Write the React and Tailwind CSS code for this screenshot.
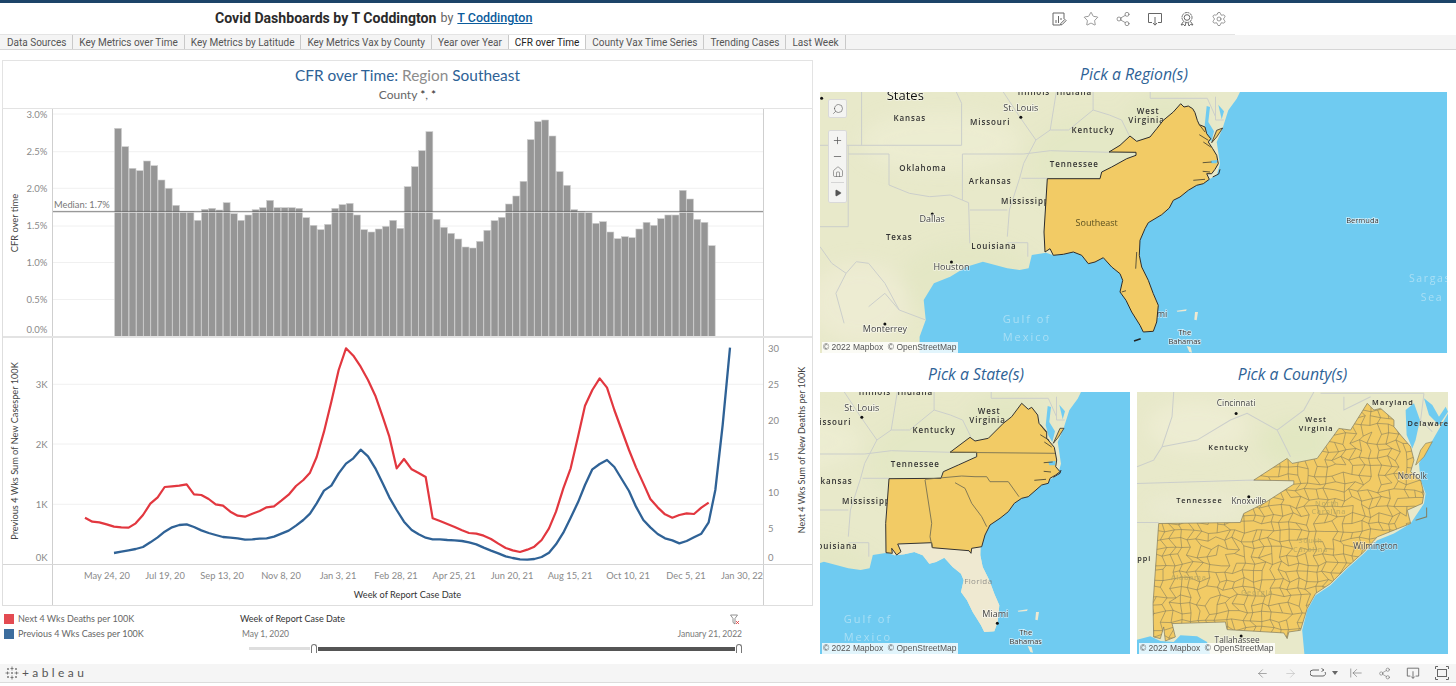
import React from "react";
import { Star, Share2, Settings, ArrowLeft, ArrowRight, ArrowLeftToLine, Plus, Minus, Home, Search, Play } from "lucide-react";

const TABS = ["Data Sources","Key Metrics over Time","Key Metrics by Latitude","Key Metrics Vax by County","Year over Year","CFR over Time","County Vax Time Series","Trending Cases","Last Week"];

const BAR_TOPS = [85,140,205,212,183,197,240,265,316,334,335,361,328,325,330,308,341,361,345,329,323,301,323,323,323,325,353,376,389,373,325,314,310,345,389,396,387,379,361,385,
260,200,152,95,358,382,400,417,441,444,424,391,362,352,312,288,244,119,65,60,108,215,256,329,335,338,370,365,396,416,410,413,387,367,376,356,345,345,271,297,358,367,437];

const RED5 = [[255,548],[277,560],[298,562],[320,568],[342,575],[364,577],[386,578],[407,565],[429,540],[451,506],[473,487],[494,456],[516,454],[538,452],[560,448],[582,478],[604,480],[626,492],[647,508],[669,512],[691,530],[713,542],[735,545],[757,536],[779,528],[800,517],[822,514],[844,497],[866,479],[888,453],[910,435],[930,413],[950,366],[972,290],[994,200],[1016,105],[1038,40],[1060,62],[1082,95],[1104,135],[1126,182],[1148,245],[1168,305],[1190,400]];
const RED6 = [[12,372],[35,403],[56,414],[77,426],[98,550],[120,558],[142,567],[164,576],[186,586],[207,594],[229,596],[251,602],[273,612],[295,626],[317,639],[338,646],[360,651],[382,644],[403,635],[425,615],[447,580],[468,530],[490,460],[512,400],[534,305],[555,212],[577,165],[599,130],[621,158],[643,225],[665,285],[687,345],[708,397],[730,445],[751,492],[773,517],[795,538],[817,548],[838,540],[860,535],[882,537],[904,518],[926,503]];
const BLUE5 = [[342,654],[364,650],[386,646],[407,642],[429,636],[451,622],[473,607],[494,590],[516,577],[538,570],[560,568],[582,576],[604,586],[626,594],[647,600],[669,606],[691,608],[713,610],[735,614],[757,613],[779,611],[800,610],[822,605],[844,596],[866,587],[888,572],[910,555],[930,536],[950,505],[972,467],[994,452],[1016,415],[1038,386],[1060,370],[1082,344],[1104,364],[1126,400],[1148,445],[1168,487],[1190,525]];
const BLUE6 = [[12,560],[35,585],[56,598],[77,608],[98,613],[120,613],[142,615],[164,616],[186,618],[207,622],[229,628],[251,638],[273,647],[295,655],[317,664],[338,669],[360,673],[382,674],[403,672],[425,666],[447,653],[468,628],[490,593],[512,548],[534,502],[555,450],[577,403],[599,387],[621,375],[643,396],[665,432],[687,468],[708,515],[730,555],[751,577],[773,597],[795,610],[817,616],[838,625],[860,618],[882,607],[904,596],[926,562],[946,465],[968,270],[990,38]];

const linePts = (a, b) => [...a.map(([x, y]) => `${x / 3},${335 + y / 3}`), ...b.map(([x, y]) => `${x / 3 + 400},${335 + y / 3}`)].join(" ");

const r8 = ([x, y]) => [(x - 11) / 2.45, (y - 96) / 3];
const r9 = ([x, y]) => [x / 3 + 154, (y - 96) / 3];
const r10 = ([x, y]) => [x / 3 + 220, y / 3];
const uv = p => p;
const pth = (a, f, close = true) => "M" + a.map(p => f(p).map(n => n.toFixed(1)).join(",")).join("L") + (close ? "Z" : "");

const SEA_W = [[1560,96],[1560,890],[255,890],[255,830],[270,780],[265,720],[290,670],[330,650],[370,620],[410,605],[470,625],[500,630],[522,625],[530,585],[565,578]];
const SEA_E = [[40,490],[70,487],[100,480],[125,490],[145,515],[165,510],[190,497],[215,525],[240,545],[248,565],[240,600],[258,625],[275,660],[300,700],[310,720],[340,718],[350,690],[355,640],[340,605],[325,565],[305,525],[298,490],[300,445],[315,410],[325,392],[345,380],[365,368],[388,348],[400,325],[420,315],[445,295],[470,280],[490,275],[508,262],[530,250],[540,215],[530,150],[548,108],[565,55],[590,20],[600,0]];
const SEA_UV = [...SEA_W.map(r8), ...SEA_E.map(r10)];
const SE10 = [[422,35],[432,45],[445,42],[458,50],[465,62],[472,85],[478,98],[495,105],[500,125],[512,140],[505,150],[518,170],[530,190],[535,215],[525,232],[515,245],[500,245],[508,262],[490,275],[470,280],[445,295],[420,315],[400,325],[388,348],[365,368],[345,380],[325,392],[315,410],[300,445],[298,490],[305,525],[325,565],[340,605],[355,640],[350,690],[340,718],[310,720],[300,700],[275,660],[258,625],[240,600],[248,565],[240,545],[215,525],[190,497],[165,510],[145,515],[125,490],[100,480],[70,487],[40,490],[30,470],[15,480],[12,420],[22,260],[180,260],[185,240],[215,225],[260,200],[288,190],[288,181],[207,180],[240,160],[270,132],[290,148],[330,135],[350,110],[370,85],[400,60]];
const SHORE10 = [[515,152],[530,115],[548,108],[530,135]];
const FLORIDA10 = [[15,480],[30,470],[40,490],[70,487],[100,480],[125,490],[145,515],[165,510],[190,497],[215,525],[240,545],[248,565],[240,600],[258,625],[275,660],[300,700],[310,720],[340,718],[350,690],[355,640],[340,605],[325,565],[305,525],[298,490],[298,455],[100,440],[20,440]];
const INLETS10 = [[[478,98],[495,120]],[[478,128],[505,145]],[[490,150],[512,165]],[[488,212],[515,210]],[[488,238],[510,240]],[[460,265],[495,262]],[[290,480],[287,530]],[[245,600],[258,596]]];
const LINES8 = [
  [[113,96],[113,256]],[[11,256],[358,256]],[[345,96],[358,130],[358,256]],[[80,256],[80,500],[11,500]],[[80,282],[180,282],[180,375],[230,400],[280,410],[330,405],[375,428],[378,550]],[[360,282],[360,420]],[[360,282],[510,282],[575,272],[720,277]],
  [[460,96],[500,170],[540,240],[510,310],[500,355],[475,450],[470,530]],[[378,450],[470,450]],[[505,355],[570,355]],[[470,548],[520,548],[520,590]],
  [[11,560],[40,610],[75,640],[100,605],[130,610],[170,670],[205,750],[270,780]],[[590,96],[575,210],[620,210],[650,180],[680,150],[720,165],[750,180],[770,230]],[[680,96],[680,150]],[[820,96],[820,115],[960,115],[980,170]],[[980,110],[980,180],[1000,180]],[[540,240],[575,210]],[[75,640],[50,700],[70,790]],[[130,740],[170,700],[205,750]]];
const LABELS = [
  ["States",220,110,"city",13,"#111"],["Kansas",231,173,"st"],["Missouri",428,186,"st"],["St. Louis",503,143,"city"],["Illinois",535,97,"st"],["Indiana",634,97,"st"],["West",815,153,"st"],["Virginia",811,180,"st"],["Kentucky",680,210,"st"],["Oklahoma",263,325,"st"],["Arkansas",428,362,"st"],["Tennessee",634,313,"st"],["Mississippi",518,423,"st"],["Dallas",286,476,"city"],["Texas",205,531,"st"],["Louisiana",437,557,"st"],["Houston",333,620,"city"],["Monterrey",170,806,"city"],["Miami",830,760,"city"]
];
const DOTS8 = [[503,172],[286,462],[333,606],[170,792],[15,115]];

const YELLOW = "#f2cb65", LAND = "#e8e9ca", SEA = "#6fcbf1", CREAM = "#efe9d1", BORDER = "#cbcecb";

const SE9 = [[620,130],[640,148],[650,142],[668,165],[672,190],[695,215],[695,235],[718,262],[725,300],[722,320],[735,335],[722,345],[705,355],[700,370],[680,375],[640,410],[620,415],[598,430],[580,455],[555,475],[525,495],[510,525],[500,560],[470,565],[468,580],[462,572],[352,563],[350,548],[248,552],[258,575],[245,585],[230,565],[232,580],[213,578],[212,490],[222,356],[378,355],[385,335],[430,315],[485,290],[485,277],[405,277],[465,232],[480,243],[520,235],[565,190],[590,170]];
const INNER9 = [[[405,277],[720,280]],[[330,358],[440,348],[480,350],[515,350],[525,365],[580,365],[612,410]],[[420,368],[450,385],[470,430],[500,470],[515,500]],[[330,360],[350,490],[345,530],[352,563]]];

function Blobs() {
  return (
    <g filter="url(#b)">
      <ellipse cx="150" cy="190" rx="70" ry="40" fill="#dfe6c0" opacity=".5" />
      <ellipse cx="40" cy="210" rx="50" ry="40" fill="#f0ecd5" opacity=".7" />
      <ellipse cx="270" cy="70" rx="60" ry="45" fill="#e0e7c2" opacity=".5" />
      <ellipse cx="120" cy="50" rx="80" ry="30" fill="#eeeed4" opacity=".7" />
      <ellipse cx="345" cy="30" rx="40" ry="28" fill="#dde6bd" opacity=".5" />
    </g>
  );
}

function BaseMap({ florida, children }) {
  return (
    <>
      <defs><filter id="b"><feGaussianBlur stdDeviation="9" /></filter></defs>
      <rect x="-10" y="-10" width="700" height="290" fill={LAND} />
      <Blobs />
      <path d={pth(SEA_UV, uv)} fill={SEA} />
      <path d={pth([[500,42],[510,45],[505,90],[522,118],[514,150],[502,130],[494,100]], r10)} fill={SEA} />
      <path d={pth([[535,38],[552,58],[545,82],[540,60]], r10)} fill={SEA} />
      {florida && <path d={pth(FLORIDA10, r10)} fill={CREAM} />}
      {LINES8.map((l, i) => <path key={i} d={pth(l, r8, false)} fill="none" stroke={BORDER} strokeWidth="1" />)}
      <path d={pth([[410,656],[440,652],[438,657],[412,659]], r10)} fill={CREAM} />
      <path d={pth([[465,660],[474,660],[470,685],[463,683]], r10)} fill={CREAM} />
      <path d={pth([[440,762],[452,765],[456,782],[448,780]], r10)} fill={CREAM} />
      {DOTS8.map(([x, y], i) => { const [u, v] = r8([x, y]); return <circle key={i} cx={u} cy={v} r="1.5" fill="#111" />; })}
      {LABELS.map(([t, x, y, k, fs, col]) => {
        const [u, v] = r8([x, y]);
        return k === "st"
          ? <text key={t} x={u} y={v + 3} textAnchor="middle" fontFamily="Open Sans, sans-serif" fontWeight="600" fontSize="8" letterSpacing="0.9" fill="#333">{t}</text>
          : <text key={t} x={u} y={v + 3.5} textAnchor="middle" fontFamily="Open Sans, sans-serif" fontSize={fs || 9} fill={col || "#444"} stroke="#ffffff" strokeOpacity=".55" strokeWidth="1.5" paintOrder="stroke">{t}</text>;
      })}
      {[["Gulf of",518,776],["Mexico",518,832]].map(([t, x, y]) => { const [u, v] = r8([x, y]); return <text key={t} x={u} y={v + 4} textAnchor="middle" fontFamily="Open Sans, sans-serif" fontSize="11" letterSpacing="2" fill="#a9dff5">{t}</text>; })}
      {[["The",434,721],["Bahamas",434,748]].map(([t, x, y]) => { const [u, v] = r10([x, y]); return <text key={t} x={u} y={v + 3} textAnchor="middle" fontFamily="Open Sans, sans-serif" fontSize="7.5" fill="#333" stroke="#fff" strokeOpacity=".7" strokeWidth="1.5" paintOrder="stroke">{t}</text>; })}
      {children}
    </>
  );
}

function Attribution() {
  return <div className="absolute left-[2px] bottom-0 bg-white/80 px-[1px] text-[8.5px] leading-[11px] text-[#555] whitespace-nowrap font-['Liberation_Sans',sans-serif]">© 2022 Mapbox&nbsp; © OpenStreetMap</div>;
}

function RegionMap() {
  const [u, v] = r10([170, 393]);
  const [bu, bv] = r8([1340, 481]);
  return (
    <div className="relative h-[261px] w-[627px] overflow-hidden">
      <svg width="627" height="261" viewBox="0 0 627 261" className="block">
        <BaseMap>
          <path d={pth(SE10, r10)} fill={YELLOW} stroke="#2b2b2b" strokeWidth="1" strokeLinejoin="round" />
          <path d={pth(SHORE10, r10)} fill={YELLOW} stroke="#2b2b2b" strokeWidth=".8" />
          <path d={pth([[518,255],[536,246],[540,232]], r10, false)} fill="none" stroke="#2b2b2b" strokeWidth="1" />
          <path d={pth([[282,747],[302,740]], r10, false)} stroke="#222" strokeWidth="1.5" fill="none" />
          <path d={pth([[512,206],[532,204],[530,214],[514,214]], r10)} fill={SEA} />
          {INLETS10.map((l, i) => <path key={i} d={pth(l, r10, false)} fill="none" stroke="#3a3a30" strokeWidth=".8" />)}
          <text x={u} y={v + 3} textAnchor="middle" fontFamily="Open Sans, sans-serif" fontSize="9" fill="#5b5020">Southeast</text>
          <text x={bu} y={bv + 3} textAnchor="middle" fontFamily="Open Sans, sans-serif" fontSize="7.5" fill="#333" stroke="#fff" strokeOpacity=".7" strokeWidth="1.5" paintOrder="stroke">Bermuda</text>
          <text x="610" y="190" textAnchor="middle" fontFamily="Open Sans, sans-serif" fontSize="10.5" letterSpacing="1.6" fill="#a9dff5">Sargas</text>
          <text x="612" y="209" textAnchor="middle" fontFamily="Open Sans, sans-serif" fontSize="10.5" letterSpacing="1.6" fill="#a9dff5">Sea</text>
        </BaseMap>
      </svg>
      <div className="absolute left-[8px] top-[7px] flex h-[19px] w-[19px] items-center justify-center rounded-[2px] border border-[#d9d9d9] bg-[#f4f4f2]">
        <Search size={12} strokeWidth={1.2} color="#555" className="-scale-x-100" />
      </div>
      <div className="absolute left-[8px] top-[38px] flex w-[19px] flex-col items-center rounded-[2px] border border-[#d9d9d9] bg-[#f4f4f2] py-[1px]">
        <span className="flex h-[16px] items-center"><Plus size={11} strokeWidth={1.6} color="#555" /></span>
        <span className="flex h-[16px] items-center"><Minus size={11} strokeWidth={1.6} color="#555" /></span>
        <span className="flex h-[16px] items-center"><Home size={12} strokeWidth={1.1} color="#555" /></span>
        <span className="my-[2px] h-px w-[13px] bg-[#d5d5d5]" />
        <span className="flex h-[16px] items-center"><Play size={8} strokeWidth={1} color="#555" fill="#555" /></span>
      </div>
      <Attribution />
    </div>
  );
}

function StateMap() {
  const lab = (t, x, y, op = 1) => { const [u, v] = r9([x, y]); return <text key={t} x={u} y={v + 3} textAnchor="middle" fontFamily="Open Sans, sans-serif" fontSize="8" letterSpacing=".4" fill="#777" opacity={op}>{t}</text>; };
  const [mx, my] = r9([547, 790]);
  return (
    <div className="relative h-[262px] w-[310px] overflow-hidden">
      <svg width="310" height="262" viewBox="159 0 310 262" className="block">
        <BaseMap florida>
          {lab("Florida", 490, 664, .75)}
          <circle cx={mx} cy={my} r="1.5" fill="#111" />
          <path d={pth(SE9, r9)} fill={YELLOW} stroke="#333" strokeWidth="1" strokeLinejoin="round" />
          <path d={pth([[715,250],[735,205],[747,205],[730,232]], r9)} fill={YELLOW} stroke="#333" strokeWidth=".8" />
          <path d={pth([[715,352],[735,340],[738,330]], r9, false)} fill="none" stroke="#333" strokeWidth="1" />
          <path d={pth([[700,305],[722,303],[720,316],[703,316]], r9)} fill={SEA} />
          {INLETS10.slice(0, 6).map((l, i) => <path key={i} d={pth(l, r10, false)} fill="none" stroke="#3a3a30" strokeWidth=".8" />)}
          {INNER9.map((l, i) => <path key={i} d={pth(l, r9, false)} fill="none" stroke="#777052" strokeWidth=".9" />)}
        </BaseMap>
      </svg>
      <Attribution />
    </div>
  );
}

const COUNTY = [[710,130],[730,150],[750,145],[790,180],[790,200],[810,225],[840,260],[850,300],[840,335],[870,360],[880,400],[875,430],[830,450],[840,490],[790,510],[740,530],[700,575],[650,620],[600,670],[555,700],[530,745],[510,810],[475,815],[470,835],[460,818],[290,808],[285,785],[125,790],[135,830],[105,842],[100,800],[90,835],[70,830],[68,730],[85,490],[330,487],[340,460],[400,430],[490,372],[490,362],[370,360],[470,295],[485,310],[560,295],[625,205],[660,210]];

function meshPath() {
  let s = 12345;
  const rnd = () => { s = (s * 1664525 + 1013904223) % 4294967296; return s / 4294967296; };
  const cell = 27, cols = 38, rows = 34, P = [];
  for (let j = 0; j < rows; j++) {
    P.push([]);
    for (let i = 0; i < cols; i++) {
      const ox = i * cell + (j % 2 ? cell * .35 : 0) + 40, oy = j * cell * .9 + 100;
      P[j].push([ox + (rnd() - .5) * 15, oy + (rnd() - .5) * 15]);
    }
  }
  let d = "";
  for (let j = 0; j < rows; j++) for (let i = 0; i < cols; i++) {
    const a = P[j][i];
    if (i + 1 < cols && rnd() < .9) d += `M${a[0].toFixed(0)},${a[1].toFixed(0)}L${P[j][i + 1][0].toFixed(0)},${P[j][i + 1][1].toFixed(0)}`;
    if (j + 1 < rows && rnd() < .9) d += `M${a[0].toFixed(0)},${a[1].toFixed(0)}L${P[j + 1][i][0].toFixed(0)},${P[j + 1][i][1].toFixed(0)}`;
  }
  return d;
}
const MESH = meshPath();

function CountyMap() {
  const id = ([x, y]) => [x, y];
  const lines = [[[20,370],[370,360],[490,362]],[[130,96],[125,170],[95,260],[70,300],[20,320]],[[95,260],[200,240],[300,180],[350,160],[440,210],[480,290]],[[550,96],[520,150],[440,210]],[[640,110],[640,150],[720,110]],[[880,100],[870,180],[905,215]],[[20,487],[85,487]],[[570,100],[880,100]]];
  const text = (t, x, y, k) => k === "st"
    ? <text key={t + x} x={x} y={y + 9} textAnchor="middle" fontFamily="Open Sans, sans-serif" fontWeight="600" fontSize="22" letterSpacing="3" fill="#2c2c2c">{t}</text>
    : k === "faint"
    ? <text key={t + x} x={x} y={y + 8} textAnchor="middle" fontFamily="Open Sans, sans-serif" fontWeight="600" fontSize="22" letterSpacing="2" fill="#b3a562" opacity=".7">{t}</text>
    : <text key={t + x} x={x} y={y + 9} textAnchor="middle" fontFamily="Open Sans, sans-serif" fontSize="25" fill="#444" stroke="#fff" strokeOpacity=".5" strokeWidth="4" paintOrder="stroke">{t}</text>;
  return (
    <div className="relative h-[262px] w-[311px] overflow-hidden">
      <svg width="311" height="262" viewBox="20 96 932 785" className="block">
        <defs><clipPath id="cty"><path d={pth(COUNTY, id)} /></clipPath><filter id="c"><feGaussianBlur stdDeviation="25" /></filter></defs>
        <rect x="0" y="90" width="980" height="800" fill={LAND} />
        <g filter="url(#c)"><ellipse cx="200" cy="200" rx="150" ry="80" fill="#f0eed6" opacity=".7" /><ellipse cx="500" cy="250" rx="110" ry="70" fill="#dde6bd" opacity=".6" /><ellipse cx="200" cy="440" rx="150" ry="40" fill="#eaead0" /></g>
        <path d={pth([[952,160],[900,250],[865,310],[870,360],[885,400],[880,430],[840,490],[790,520],[740,540],[700,580],[650,625],[600,675],[555,705],[530,750],[515,810],[522,885],[960,885],[960,160]], id)} fill={SEA} />
        <path d={pth([[825,150],[850,130],[868,180],[855,240],[845,265],[828,225]], id)} fill={SEA} />
        <path d={pth([[880,115],[905,135],[925,170],[945,140],[952,155],[925,195],[895,165]], id)} fill={SEA} />
        <path d={pth([[20,838],[60,828],[90,842],[130,845],[150,825],[200,828],[230,845],[240,885],[20,885]], id)} fill={SEA} />
        {lines.map((l, i) => <path key={i} d={pth(l, id, false)} fill="none" stroke={BORDER} strokeWidth="3" />)}
        <circle cx="317" cy="160" r="4.5" fill="#111" /><circle cx="355" cy="410" r="4.5" fill="#111" /><circle cx="332" cy="827" r="4.5" fill="#111" />
        {text("Cincinnati",317,130)}{text("West",557,177,"st")}{text("Virginia",557,205,"st")}{text("Maryland",787,126,"st")}{text("Delaware",893,189,"st")}{text("Kentucky",295,260,"st")}{text("Tennessee",207,421,"st")}{text("Knoxville",355,422)}{text("ppi",42,594,"st")}{text("Tallahassee",320,840)}
        <path d={pth(COUNTY, id)} fill={YELLOW} />
        <path d={pth([[855,315],[870,270],[885,250],[905,245],[880,290]], id)} fill={YELLOW} stroke="#857e5e" strokeWidth="2" />
        <path d="M855 480L888 470L888 442" fill="none" stroke="#857e5e" strokeWidth="3" />
        <g clipPath="url(#cty)"><path d={MESH} fill="none" stroke="#857e5e" strokeWidth="1.8" /></g>
        <path d={pth(COUNTY, id)} fill="none" stroke="#857e5e" strokeWidth="2.2" strokeLinejoin="round" />
        {text("North",590,430,"faint")}{text("Carolina",595,455,"faint")}{text("South",540,540,"faint")}{text("Carolina",540,567,"faint")}{text("Alabama",175,650,"faint")}{text("Georgia",380,695,"faint")}
        {text("Norfolk",845,348)}{text("Wilmington",735,557)}
      </svg>
      <Attribution />
    </div>
  );
}

const PT = { fontFamily: "Lato, sans-serif" };

function TopBars() {
  return (
    <svg width="809" height="227" viewBox="3 109 809 227" className="block">
      {[114, 151.7, 188.3, 226, 262.5, 299.5].map(y => <line key={y} x1="53" x2="763" y1={y} y2={y} stroke="#f0f0f0" />)}
      {BAR_TOPS.map((t, i) => <rect key={i} x={114.6 + i * 7.24} y={100 + t / 3} width="6.9" height={337 - (100 + t / 3)} fill="#969696" stroke="#cfcfcf" strokeWidth=".6" />)}
      <line x1="52" x2="763" y1="212.3" y2="212.3" stroke="#dcdcdc" />
      <line x1="52" x2="763" y1="211.4" y2="211.4" stroke="#555" strokeOpacity=".65" />
      <line x1="52.5" x2="52.5" y1="109" y2="337" stroke="#cfcfcf" />
      <line x1="763.5" x2="763.5" y1="109" y2="337" stroke="#cfcfcf" />
      <text x="54" y="208" style={PT} fontSize="9.3" fill="#777">Median: 1.7%</text>
      {[["3.0%",118],["2.5%",155],["2.0%",191.7],["1.5%",229],["1.0%",265.5],["0.5%",302.5],["0.0%",333]].map(([t, y]) => <text key={t} x="47.5" y={y} textAnchor="end" style={PT} fontSize="9.5" fill="#8a8a8a">{t}</text>)}
      <text transform="translate(18 223) rotate(-90)" textAnchor="middle" style={PT} fontSize="9.3" fill="#444">CFR over time</text>
    </svg>
  );
}

function LineChart() {
  return (
    <svg width="809" height="226" viewBox="3 338 809 226" className="block">
      {[384.3, 444, 504.3].map(y => <line key={y} x1="53" x2="763" y1={y} y2={y} stroke="#f0f0f0" />)}
      <line x1="52.5" x2="52.5" y1="337" y2="565" stroke="#cfcfcf" />
      <line x1="763.5" x2="763.5" y1="337" y2="565" stroke="#cfcfcf" />
      <polyline points={linePts(RED5, RED6)} fill="none" stroke="#e2373f" strokeWidth="2.2" strokeLinejoin="round" />
      <polyline points={linePts(BLUE5, BLUE6)} fill="none" stroke="#2f6296" strokeWidth="2.3" strokeLinejoin="round" />
      {[["3K",388],["2K",448],["1K",508],["0K",561]].map(([t, y]) => <text key={t} x="47.5" y={y} textAnchor="end" style={PT} fontSize="9.5" fill="#8a8a8a">{t}</text>)}
      {[["30",351.5],["25",388],["20",423.5],["15",459.5],["10",495.5],["5",531.5],["0",561]].map(([t, y]) => <text key={t} x="768" y={y} style={PT} fontSize="9.5" fill="#8a8a8a">{t}</text>)}
      <text transform="translate(18 451) rotate(-90)" textAnchor="middle" style={PT} fontSize="9.2" fill="#444">Previous 4 Wks Sum of New Casesper 100K</text>
      <text transform="translate(805 450) rotate(-90)" textAnchor="middle" style={PT} fontSize="9" fill="#444">Next 4 Wks Sum of New Deaths per 100K</text>
    </svg>
  );
}

function XAxis() {
  const L = [["May 24, 20",107],["Jul 19, 20",165],["Sep 13, 20",222],["Nov 8, 20",281],["Jan 3, 21",338],["Feb 28, 21",396],["Apr 25, 21",454],["Jun 20, 21",512],["Aug 15, 21",570],["Oct 10, 21",628],["Dec 5, 21",686],["Jan 30, 22",742]];
  return (
    <svg width="809" height="40" viewBox="3 565 809 40" className="block">
      <line x1="52.5" x2="52.5" y1="565" y2="605" stroke="#cfcfcf" />
      <line x1="763.5" x2="763.5" y1="565" y2="605" stroke="#cfcfcf" />
      {L.map(([t, x]) => <text key={t} x={x} y="578.500" textAnchor="middle" style={PT} fontSize="9.3" fill="#8a8a8a">{t}</text>)}
      <text x="407.5" y="598" textAnchor="middle" style={PT} fontSize="9.2" fill="#333">Week of Report Case Date</text>
    </svg>
  );
}

function HeaderIcons() {
  const c = "#666";
  return (
    <div className="ml-auto mr-[8px] flex items-center gap-[16px]">
      <svg width="16" height="16" viewBox="0 0 16 16" fill="none" stroke={c} strokeWidth="1"><path d="M9 14H2V2h11v6" /><path d="M5 9v3M7.5 5v7M10 7v2" /><path d="M9.5 14l.4-1.600 4-4 1.200 1.200-4 4z" /></svg>
      <Star size={16} strokeWidth={1} color={c} />
      <Share2 size={16} strokeWidth={1} color={c} />
      <svg width="16" height="16" viewBox="0 0 16 16" fill="none" stroke={c} strokeWidth="1"><path d="M5 11.500H1.500v-9h13v9H11" /><path d="M8 6v8M6 12l2 2.200 2-2.200" /></svg>
      <svg width="16" height="16" viewBox="0 0 16 16" fill="none" stroke={c} strokeWidth="1"><circle cx="8" cy="6.500" r="5" strokeDasharray="2 .6" /><circle cx="8" cy="6.500" r="2.800" /><path d="M4.500 10.500L2 14l2.500-.5L6 15l1-3.500M11.500 10.500L14 14l-2.500-.5L10 15l-1-3.500" /></svg>
      <Settings size={16} strokeWidth={1} color={c} />
    </div>
  );
}

function FooterIcons() {
  const c = "#666";
  return (
    <div className="ml-auto flex items-center">
      <ArrowLeft size={13} strokeWidth={1} color={c} className="mr-[15px]" />
      <ArrowRight size={13} strokeWidth={1} color="#b5b5b5" className="mr-[13px]" />
      <svg width="17" height="10" viewBox="0 0 17 10" fill="none" stroke={c} strokeWidth="1" className="mr-[5px]"><path d="M9 2H3a2.500 2.500 0 000 6h10a2.500 2.500 0 002-4" /><path d="M11.500 .5L14 2l-2.500 1.500" /></svg>
      <span className="mr-[11px] h-0 w-0 border-x-[3px] border-t-[4px] border-x-transparent border-t-[#666]" />
      <ArrowLeftToLine size={14} strokeWidth={1} color={c} className="mr-[15px]" />
      <Share2 size={13} strokeWidth={1} color={c} className="mr-[15px]" />
      <svg width="14" height="14" viewBox="0 0 16 16" fill="none" stroke={c} strokeWidth="1" className="mr-[15px]"><path d="M5 11.500H1.500v-9h13v9H11" /><path d="M8 6v8M6 12l2 2.200 2-2.200" /></svg>
      <svg width="14" height="14" viewBox="0 0 14 14" fill="none" stroke={c} strokeWidth="1" className="mr-[7px]"><rect x="2.500" y="3.500" width="9" height="7" /><path d="M.5 3V.5H3M11 .5h2.500V3M13.500 11v2.500H11M3 13.500H.5V11" /></svg>
    </div>
  );
}

function TableauLogo() {
  return (
    <svg width="14" height="14" viewBox="0 0 14 14" stroke="#666" strokeWidth=".8" className="mr-[3px]">
      <path d="M7 .5v4M5.500 2.500h3M7 9.500v4M5.500 11.500h3M.5 7h4M2.500 5.500v3M9.500 7h4M11.500 5.500v3M3 2v2M2 3h2M11 2v2M10 3h2M3 10v2M2 11h2M11 10v2M10 11h2M6 7h2M7 6v2" />
    </svg>
  );
}

function Handle() {
  return <span className="h-[9px] w-[6px] shrink-0 rounded-t-[3px] border border-b-0 border-[#777] bg-white" />;
}

export default function App() {
  return (
    <div className="flex h-[686px] w-[1456px] flex-col overflow-hidden bg-white font-['Lato',sans-serif]">
      <div className="h-[3px] bg-[#1d4468]" />
      <header className="flex h-[32px] w-[1235px] items-center border-b border-[#e4e4e4] pl-[215px]">
        <span className="font-['Roboto',sans-serif] text-[14.1px] font-bold text-[#2b2b2b]">Covid Dashboards by T Coddington</span>
        <span className="ml-[4px] font-['Roboto',sans-serif] text-[12.5px] text-[#666]">by</span>
        <a className="ml-[4px] font-['Roboto',sans-serif] text-[12.5px] font-medium text-[#0b5c9c] underline">T Coddington</a>
        <HeaderIcons />
      </header>
      <nav className="flex h-[15px] items-stretch border-b border-[#d6d6d6] bg-[#f4f4f4] pl-[1px] font-['Roboto',sans-serif] text-[10px] text-[#555]">
        {TABS.map(t => (
          <span key={t} className={t === "CFR over Time" ? "flex items-center border-r border-[#c9c9c9] bg-white px-[6px] text-[#222]" : "flex items-center border-r border-[#c9c9c9] px-[6px]"}>{t}</span>
        ))}
      </nav>
      <main className="flex flex-1">
        <section className="ml-[2px] flex w-[811px] flex-col pt-[10px]">
          <div className="flex h-[49px] flex-col items-center border border-[#e3e3e3] pt-[4px]">
            <h1 className="text-[15.4px] leading-[21px] text-[#2e6296]">CFR over Time: <span className="text-[#8c8c8c]">Region</span> Southeast</h1>
            <p className="mt-[1px] text-[12px] leading-[16px] text-[#666]">County <span className="text-[#222]">*</span>, <span className="text-[#222]">*</span></p>
          </div>
          <div className="border-x border-b border-[#dedede]">
            <div className="border-b-2 border-[#e3e3e3]"><TopBars /></div>
            <div className="border-b border-[#d6d6d6]"><LineChart /></div>
            <XAxis />
          </div>
          <div className="flex flex-1 pt-[8px] text-[9px]">
            <div className="flex w-[238px] flex-col gap-[5px] pl-[2px] text-[#666]">
              <div className="flex h-[10px] items-center gap-[4px]"><span className="h-[10px] w-[10px] bg-[#e34b52]" />Next 4 Wks Deaths per 100K</div>
              <div className="flex h-[10px] items-center gap-[4px]"><span className="h-[10px] w-[10px] bg-[#3c6d9e]" />Previous 4 Wks Cases per 100K</div>
            </div>
            <div className="flex w-[502px] flex-col">
              <div className="flex h-[10px] items-center justify-between text-[#333]">
                <span>Week of Report Case Date</span>
                <svg width="10" height="11" viewBox="0 0 10 11" fill="none" stroke="#777" strokeWidth=".8" className="mr-[2px]"><path d="M.5 1h7L5 4.500V10L3 8.500v-4z" /><path d="M6 7l3 3M9 7l-3 3" stroke="#d33" /></svg>
              </div>
              <div className="mt-[5px] flex h-[11px] items-center justify-between pl-[2px] text-[8.5px] text-[#777]">
                <span>May 1, 2020</span><span>January 21, 2022</span>
              </div>
              <div className="ml-[9px] mt-[4px] flex h-[9px] items-end gap-[1px]">
                <span className="mb-[3px] h-[3px] w-[61px] bg-[#dedede]" />
                <Handle />
                <span className="mb-[2px] h-[4px] flex-1 bg-[#555]" />
                <Handle />
              </div>
            </div>
          </div>
        </section>
        <section className="ml-[7px] flex w-[628px] flex-col font-['Open_Sans',sans-serif]">
          <h2 className="flex h-[42px] items-center justify-center pt-[8px] text-[15.8px] font-normal italic text-[#2e6296]">Pick a Region(s)</h2>
          <RegionMap />
          <div className="flex h-[39px]">
            <h2 className="flex w-[312px] shrink-0 items-center justify-center pt-[5px] text-[15.8px] italic text-[#2e6296]">Pick a State(s)</h2>
            <h2 className="flex w-[321px] shrink-0 items-center justify-center pt-[5px] text-[15.8px] italic text-[#2e6296]">Pick a County(s)</h2>
          </div>
          <div className="flex gap-[7px]">
            <StateMap />
            <CountyMap />
          </div>
        </section>
      </main>
      <footer className="mb-[3px] flex h-[19px] items-center border-b border-[#dcdcdc] bg-[#f5f5f5] pl-[5px] text-[#555]">
        <TableauLogo />
        <span className="text-[12px] tracking-[3.4px]">+ableau</span>
        <FooterIcons />
      </footer>
    </div>
  );
}
